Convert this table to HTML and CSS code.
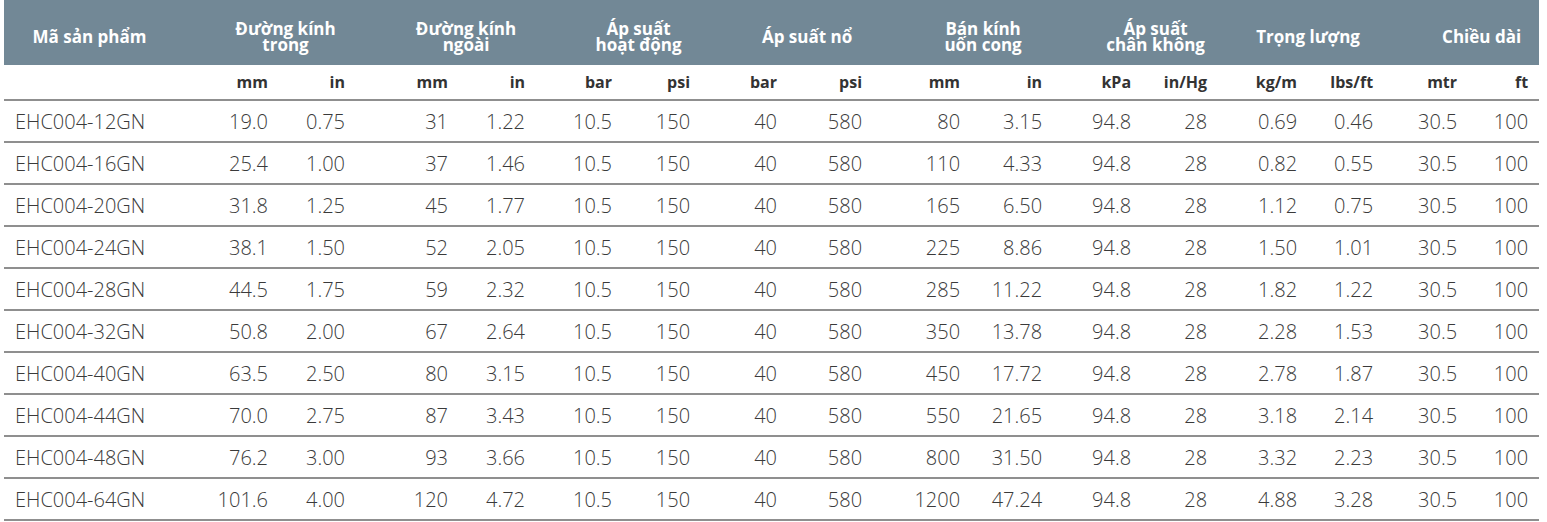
FILE: index.html
```html
<!DOCTYPE html>
<html lang="vi">
<head>
<meta charset="utf-8">
<title>EHC004</title>
<link rel="stylesheet" href="styles.css">
</head>
<body>
<table class="spec">
  <colgroup>
    <col class="c0"><col class="c1"><col class="c2"><col class="c3"><col class="c4"><col class="c5"><col class="c6"><col class="c7"><col class="c8"><col class="c9"><col class="c10"><col class="c11"><col class="c12"><col class="c13"><col class="c14"><col class="c15"><col class="c16">
  </colgroup>
  <thead>
    <tr class="groups">
      <th class="name-head">Mã sản phẩm</th>
      <th colspan="2" class="grp"><span class="ln">Đường kính</span><span class="ln">trong</span></th>
      <th colspan="2" class="grp"><span class="ln">Đường kính</span><span class="ln">ngoài</span></th>
      <th colspan="2" class="grp"><span class="ln">Áp suất</span><span class="ln">hoạt động</span></th>
      <th colspan="2" class="grp">Áp suất nổ</th>
      <th colspan="2" class="grp"><span class="ln">Bán kính</span><span class="ln">uốn cong</span></th>
      <th colspan="2" class="grp"><span class="ln">Áp suất</span><span class="ln">chân không</span></th>
      <th colspan="2" class="grp grp-narrow">Trọng lượng</th>
      <th colspan="2" class="grp">Chiều dài</th>
    </tr>
    <tr class="units">
      <th></th>
      <th>mm</th><th>in</th>
      <th>mm</th><th>in</th>
      <th>bar</th><th>psi</th>
      <th>bar</th><th>psi</th>
      <th>mm</th><th>in</th>
      <th>kPa</th><th>in/Hg</th>
      <th>kg/m</th><th>lbs/ft</th>
      <th>mtr</th><th>ft</th>
    </tr>
  </thead>
  <tbody>
    <tr><td>EHC004-12GN</td><td>19.0</td><td>0.75</td><td>31</td><td>1.22</td><td>10.5</td><td>150</td><td>40</td><td>580</td><td>80</td><td>3.15</td><td>94.8</td><td>28</td><td>0.69</td><td>0.46</td><td>30.5</td><td>100</td></tr>
    <tr><td>EHC004-16GN</td><td>25.4</td><td>1.00</td><td>37</td><td>1.46</td><td>10.5</td><td>150</td><td>40</td><td>580</td><td>110</td><td>4.33</td><td>94.8</td><td>28</td><td>0.82</td><td>0.55</td><td>30.5</td><td>100</td></tr>
    <tr><td>EHC004-20GN</td><td>31.8</td><td>1.25</td><td>45</td><td>1.77</td><td>10.5</td><td>150</td><td>40</td><td>580</td><td>165</td><td>6.50</td><td>94.8</td><td>28</td><td>1.12</td><td>0.75</td><td>30.5</td><td>100</td></tr>
    <tr><td>EHC004-24GN</td><td>38.1</td><td>1.50</td><td>52</td><td>2.05</td><td>10.5</td><td>150</td><td>40</td><td>580</td><td>225</td><td>8.86</td><td>94.8</td><td>28</td><td>1.50</td><td>1.01</td><td>30.5</td><td>100</td></tr>
    <tr><td>EHC004-28GN</td><td>44.5</td><td>1.75</td><td>59</td><td>2.32</td><td>10.5</td><td>150</td><td>40</td><td>580</td><td>285</td><td>11.22</td><td>94.8</td><td>28</td><td>1.82</td><td>1.22</td><td>30.5</td><td>100</td></tr>
    <tr><td>EHC004-32GN</td><td>50.8</td><td>2.00</td><td>67</td><td>2.64</td><td>10.5</td><td>150</td><td>40</td><td>580</td><td>350</td><td>13.78</td><td>94.8</td><td>28</td><td>2.28</td><td>1.53</td><td>30.5</td><td>100</td></tr>
    <tr><td>EHC004-40GN</td><td>63.5</td><td>2.50</td><td>80</td><td>3.15</td><td>10.5</td><td>150</td><td>40</td><td>580</td><td>450</td><td>17.72</td><td>94.8</td><td>28</td><td>2.78</td><td>1.87</td><td>30.5</td><td>100</td></tr>
    <tr><td>EHC004-44GN</td><td>70.0</td><td>2.75</td><td>87</td><td>3.43</td><td>10.5</td><td>150</td><td>40</td><td>580</td><td>550</td><td>21.65</td><td>94.8</td><td>28</td><td>3.18</td><td>2.14</td><td>30.5</td><td>100</td></tr>
    <tr><td>EHC004-48GN</td><td>76.2</td><td>3.00</td><td>93</td><td>3.66</td><td>10.5</td><td>150</td><td>40</td><td>580</td><td>800</td><td>31.50</td><td>94.8</td><td>28</td><td>3.32</td><td>2.23</td><td>30.5</td><td>100</td></tr>
    <tr><td>EHC004-64GN</td><td>101.6</td><td>4.00</td><td>120</td><td>4.72</td><td>10.5</td><td>150</td><td>40</td><td>580</td><td>1200</td><td>47.24</td><td>94.8</td><td>28</td><td>4.88</td><td>3.28</td><td>30.5</td><td>100</td></tr>
  </tbody>
</table>
</body>
</html>
```
FILE: styles.css
```css
html, body {
  margin: 0;
  padding: 0;
  background: #ffffff;
}

body {
  font-family: "Open Sans", "Liberation Sans", sans-serif;
  color: #3a3a3a;
}

.spec {
  margin-left: 4px;
  width: 1535px;
  table-layout: fixed;
  border-collapse: collapse;
  border-spacing: 0;
}

.c0 { width: 171px; }
.c1 { width: 104px; }
.c2 { width: 77px; }
.c3 { width: 103px; }
.c4 { width: 77px; }
.c5 { width: 87px; }
.c6 { width: 78px; }
.c7 { width: 87px; }
.c8 { width: 85px; }
.c9 { width: 98px; }
.c10 { width: 82px; }
.c11 { width: 89px; }
.c12 { width: 76px; }
.c13 { width: 90px; }
.c14 { width: 76px; }
.c15 { width: 84px; }
.c16 { width: 71px; }

.groups th {
  background: #728896;
  color: #ffffff;
  font-size: 17px;
  font-weight: 700;
  line-height: 18px;
  height: 65px;
  padding: 9px 0 0 0;
  box-sizing: border-box;
  text-align: center;
  vertical-align: middle;
}

.groups .ln {
  display: block;
  height: 16px;
  line-height: 16px;
}

.groups .grp {
  padding-left: 40px;
}

.groups .grp-narrow {
  padding-left: 14px;
}

.units th {
  height: 34px;
  padding: 0 11px 0 0;
  font-size: 16px;
  font-weight: 700;
  color: #333333;
  text-align: right;
  vertical-align: middle;
  border-bottom: 2px solid #8f8f8f;
}

tbody td {
  height: 40px;
  padding: 0 11px 0 0;
  font-size: 20px;
  font-weight: 300;
  color: #3a3a3a;
  text-align: right;
  vertical-align: middle;
  border-bottom: 2px solid #8f8f8f;
  white-space: nowrap;
}

tbody td:first-child {
  text-align: left;
  padding-left: 11px;
}
```
